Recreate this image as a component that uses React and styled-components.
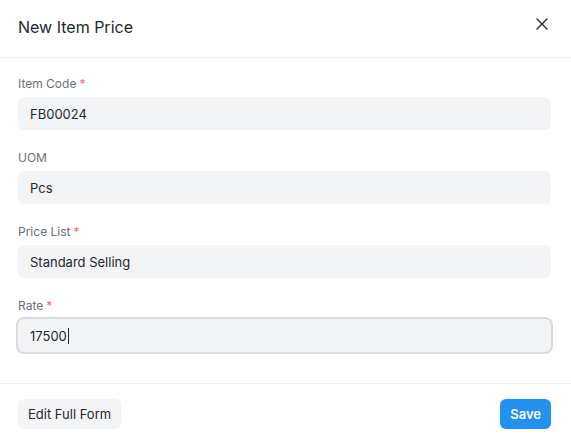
import styled, { createGlobalStyle } from "styled-components";

const GlobalStyle = createGlobalStyle`
  html, body {
    margin: 0;
    padding: 0;
    background: #ffffff;
  }
  body {
    font-family: Inter, "Noto Sans", sans-serif;
    color: #1f272e;
    -webkit-font-smoothing: antialiased;
  }
`;

// 對話框外框
const Modal = styled.div`
  width: 571px;
  height: 441px;
  background: #ffffff;
  display: flex;
  flex-direction: column;
  overflow: hidden;
`;

// 標題列
const Header = styled.div`
  height: 43px;
  padding: 15px 17px 0 18px;
  border-bottom: 1px solid #edeff1;
  display: flex;
  justify-content: space-between;
  align-items: flex-start;
`;

const Title = styled.h3`
  margin: 0;
  font-size: 16px;
  line-height: 24px;
  font-weight: 400;
  color: #1f272e;
`;

const CloseButton = styled.button`
  width: 24px;
  height: 24px;
  margin-top: -3px;
  padding: 0;
  border: none;
  background: transparent;
  display: flex;
  align-items: center;
  justify-content: center;
  cursor: pointer;
`;

const Body = styled.div`
  padding: 15px 20px 14px 18px;
  border-bottom: 1px solid #edeff1;
`;

// 每一個欄位
const Field = styled.div`
  margin-bottom: 17px;
`;

const Label = styled.div`
  font-size: 12px;
  line-height: 18px;
  color: #687178;
  padding-top: 2px;
  margin-bottom: 4px;
`;

const Required = styled.span`
  color: #f36b6b;
  margin-left: 3px;
`;

const Control = styled.div`
  height: 33px;
  box-sizing: border-box;
  padding: 0 12px;
  border-radius: 6px;
  background: #f3f4f5;
  display: flex;
  align-items: center;
  font-size: 13px;
  color: #1f272e;
  box-shadow: ${(p) => (p.$focused ? "0 0 0 2px #d9dcdf" : "none")};
`;

const Caret = styled.span`
  display: inline-block;
  width: 1px;
  height: 16px;
  background: #1f272e;
  margin-left: 1px;
`;

const Footer = styled.div`
  padding: 15px 20px 12px 18px;
  display: flex;
  justify-content: space-between;
  align-items: center;
`;

const Button = styled.button`
  height: 30px;
  padding: 0 10px;
  border: none;
  border-radius: 6px;
  font-family: Inter, "Noto Sans", sans-serif;
  font-size: 13px;
  font-weight: ${(p) => (p.$primary ? 600 : 400)};
  background: ${(p) => (p.$primary ? "#2490ef" : "#f3f4f5")};
  color: ${(p) => (p.$primary ? "#ffffff" : "#1f272e")};
  cursor: pointer;
`;

const fields = [
  { label: "Item Code", value: "FB00024", required: true },
  { label: "UOM", value: "Pcs" },
  { label: "Price List", value: "Standard Selling", required: true },
  { label: "Rate", value: "17500", required: true, focused: true },
];

const CloseIcon = () => (
  <svg width="12" height="12" viewBox="0 0 12 12" fill="none">
    <path
      d="M1 1L11 11M11 1L1 11"
      stroke="#1f272e"
      strokeWidth="1.4"
      strokeLinecap="round"
    />
  </svg>
);

const App = () => {
  return (
    <Modal>
      <GlobalStyle />
      <Header>
        <Title>New Item Price</Title>
        <CloseButton aria-label="Close">
          <CloseIcon />
        </CloseButton>
      </Header>

      {/* 表單欄位 */}
      <Body>
        {fields.map((f) => (
          <Field key={f.label}>
            <Label>
              {f.label}
              {f.required && <Required>*</Required>}
            </Label>
            <Control $focused={f.focused}>
              {f.value}
              {f.focused && <Caret />}
            </Control>
          </Field>
        ))}
      </Body>

      {/* 底部按鈕 */}
      <Footer>
        <Button>Edit Full Form</Button>
        <Button $primary>Save</Button>
      </Footer>
    </Modal>
  );
};

export default App;
